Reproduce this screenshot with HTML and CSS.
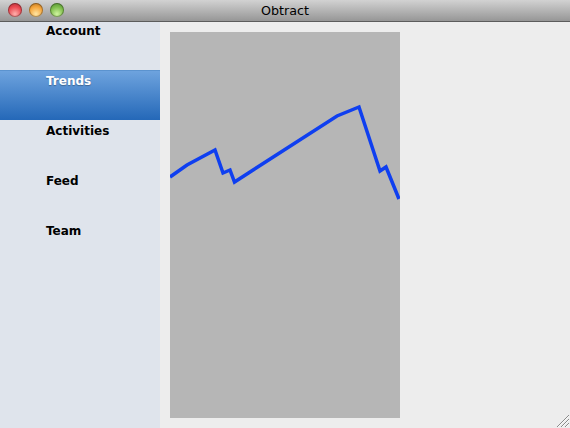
FILE: index.html
```html
<!DOCTYPE html>
<html lang="en">
<head>
  <meta charset="UTF-8">
  <title>Obtract</title>
  <link rel="stylesheet" href="styles.css">
</head>
<body>
  <div class="window">
    <header class="titlebar">
      <div class="lights">
        <span class="light light-red"></span>
        <span class="light light-yellow"></span>
        <span class="light light-green"></span>
      </div>
      <div class="title">Obtract</div>
    </header>

    <div class="main">
      <nav class="sidebar">
        <div class="nav-item nav-first">Account</div>
        <div class="nav-item nav-selected">Trends</div>
        <div class="nav-item">Activities</div>
        <div class="nav-item">Feed</div>
        <div class="nav-item">Team</div>
      </nav>

      <section class="content">
        <svg class="chart" viewBox="0 0 230 386" width="230" height="386">
          <polyline class="chart-line" points="0,145 17,133 45,118 53,141 60,138 64.5,150 167,84 189,75 210,139 216,135 229,167"></polyline>
        </svg>
      </section>
    </div>

    <svg class="grip" viewBox="0 0 14 14" width="14" height="14">
      <path class="grip-dark" d="M1 13 13 1M5 13 13 5M9 13 13 9"></path>
      <path class="grip-light" d="M2 13 13 2M6 13 13 6M10 13 13 10"></path>
    </svg>
  </div>
</body>
</html>
```

FILE: styles.css
```css
/* Ventana */
html, body {
  margin: 0;
  padding: 0;
}

.window {
  position: relative;
  width: 570px;
  height: 428px;
  overflow: hidden;
  display: flex;
  flex-direction: column;
  background-color: #ededed;
  font-family: "DejaVu Sans", sans-serif;
}

/* Barra de titulo */
.titlebar {
  position: relative;
  flex: none;
  height: 21px;
  display: flex;
  justify-content: center;
  align-items: center;
  background: linear-gradient(#d2d2d2, #969696);
  border-bottom: 1px solid #5c5c5c;
}

.title {
  font-size: 12.7px;
  color: #000;
}

.lights {
  position: absolute;
  left: 8px;
  top: 3px;
  display: flex;
  gap: 7px;
}

.light {
  width: 14px;
  height: 14px;
  border-radius: 50%;
  box-shadow: inset 0 0 0 1px rgba(0, 0, 0, 0.3);
}

.light-red {
  background: radial-gradient(circle at 50% 78%, #ffb0ac, #ea4850 55%, #a52a32);
}

.light-yellow {
  background: radial-gradient(circle at 50% 78%, #ffe6a4, #f4a43a 55%, #a86a20);
}

.light-green {
  background: radial-gradient(circle at 50% 78%, #d0f4a0, #7cbc4a 55%, #4c8430);
}

/* Contenido principal */
.main {
  flex: 1;
  display: flex;
  min-height: 0;
}

.sidebar {
  flex: none;
  width: 160px;
  background-color: #dfe4ec;
}

.nav-item {
  height: 50px;
  box-sizing: border-box;
  padding: 2px 0 0 46px;
  font-size: 12px;
  font-weight: bold;
  line-height: 19px;
  color: #000;
}

.nav-first {
  height: 48px;
  padding-top: 0;
}

.nav-selected {
  padding-top: 1px;
  color: #fff;
  text-shadow: 0 1px 1px rgba(0, 0, 0, 0.3);
  background: linear-gradient(#6ea3de, #2468b8);
  border-top: 1px solid #5b93cf;
}

.content {
  flex: 1;
  padding: 10px;
}

.chart {
  display: block;
  background-color: #b6b6b6;
}

.chart-line {
  fill: none;
  stroke: #0f3ff0;
  stroke-width: 3.5;
  stroke-linejoin: miter;
}

/* Esquina de redimension */
.grip {
  position: absolute;
  right: 0;
  bottom: 0;
}

.grip-dark {
  stroke: #8a8a8a;
  stroke-width: 1;
}

.grip-light {
  stroke: #fafafa;
  stroke-width: 1;
}
```
